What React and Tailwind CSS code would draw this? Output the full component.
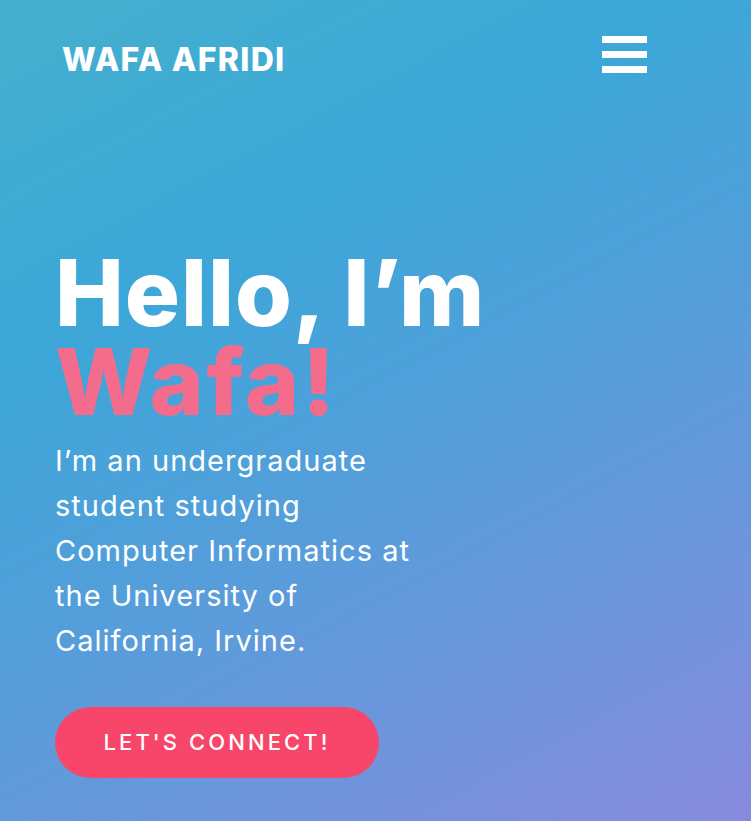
export default function App() {
  return (
    <div
      className="w-[751px] h-[821px] overflow-hidden text-white bg-[linear-gradient(152deg,#45b0cd_0%,#3ca7d8_30%,#4fa0da_50%,#6b96dc_75%,#888ade_100%)]"
      style={{ fontFamily: 'Inter, "Noto Sans", sans-serif' }}
    >
      {/* Nav */}
      <header className="flex items-start justify-between pl-[62px] pr-[104px] pt-[36px]">
        <a className="text-[32px] leading-none font-extrabold tracking-[0.04em] mt-[8px]">WAFA AFRIDI</a>
        <button className="flex flex-col gap-[8px]" aria-label="Menu">
          <span className="block w-[45px] h-[7px] bg-white" />
          <span className="block w-[45px] h-[7px] bg-white" />
          <span className="block w-[45px] h-[7px] bg-white" />
        </button>
      </header>

      {/* Hero */}
      <section className="pl-[55px] pt-[172px]">
        <h1 className="text-[92px] leading-[89px] font-extrabold tracking-[0.01em]">
          Hello, I’m
          <br />
          <span className="text-[#f46c8b] tracking-[0.03em]">Wafa!</span>
        </h1>
        <p className="mt-[12px] text-[29px] leading-[45px] font-normal tracking-[0.035em]">
          I’m an undergraduate
          <br />
          student studying
          <br />
          Computer Informatics at
          <br />
          the University of
          <br />
          California, Irvine.
        </p>
        <button className="mt-[44px] w-[324px] h-[71px] rounded-full bg-[#f7466a] text-[22px] font-medium tracking-[0.14em] text-white">
          LET'S CONNECT!
        </button>
      </section>
    </div>
  )
}
